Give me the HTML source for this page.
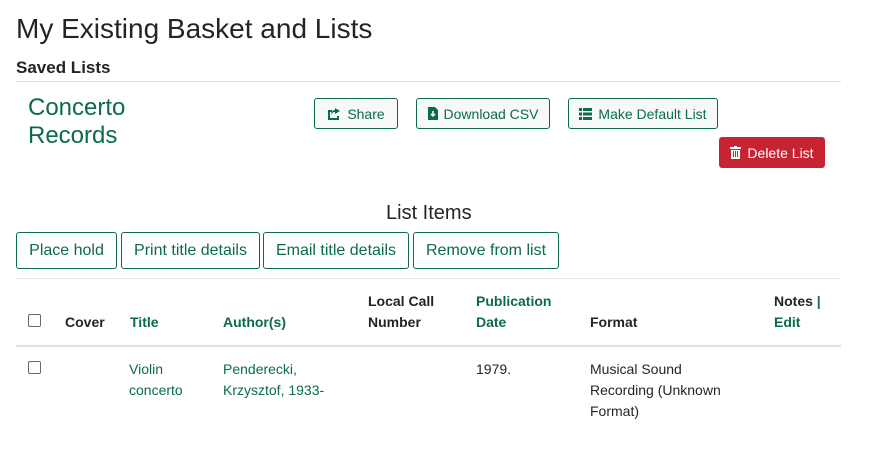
<!DOCTYPE html>
<html><head><style>
body{margin:0;width:880px;height:462px;background:#fff;font-family:"Liberation Sans",sans-serif;color:#212529;position:relative;overflow:hidden}
.a{position:absolute;white-space:nowrap}
.g{color:#0b6b4a}
.btn{position:absolute;box-sizing:border-box;border:1px solid #0b6b4a;border-radius:3px;color:#0b6b4a;background:#f8f9fa;font-size:14px;display:flex;align-items:center;justify-content:center;gap:6px}
.btn2{position:absolute;box-sizing:border-box;border:1px solid #0b6b4a;border-radius:3px;color:#0b6b4a;background:#fff;font-size:16px;display:flex;align-items:center;justify-content:center}
.th{font-size:14px;font-weight:bold;line-height:21px}
.td{font-size:14px;line-height:21px}
.cb{position:absolute;width:11px;height:11px;border:1px solid #666;border-radius:2px;background:#fff}
</style></head><body>
<div class="a" style="left:16px;top:13px;font-size:28px">My Existing Basket and Lists</div>
<div class="a" style="left:16px;top:58px;font-size:17px;font-weight:bold">Saved Lists</div>
<div class="a" style="left:16px;top:81px;width:825px;border-top:1px solid #ddd"></div>
<div class="a g" style="left:28px;top:94px;font-size:24px;line-height:28px">Concerto<br>Records</div>
<div class="btn" style="left:314px;top:98px;width:84px;height:31px"><svg width="14" height="13" viewBox="0 0 14 13"><path d="M1 3h4v2H3v6h7V9h2v4H1z" fill="#0b6b4a"/><path d="M8 1l5 3-5 3V5C6 5 5 6 4 8 4 5 6 3 8 3z" fill="#0b6b4a"/></svg>Share</div>
<div class="btn" style="left:416px;top:98px;width:134px;height:31px"><svg width="10" height="13" viewBox="0 0 10 13"><path d="M0 0h7l3 3v10H0z" fill="#0b6b4a"/><path d="M5 4v5M3 7l2 2 2-2" stroke="#fff" stroke-width="1.5" fill="none"/></svg>Download CSV</div>
<div class="btn" style="left:568px;top:98px;width:150px;height:31px"><svg width="13" height="12" viewBox="0 0 13 12"><path d="M0 0h3v3H0zM4 0h9v3H4zM0 4.5h3v3H0zM4 4.5h9v3H4zM0 9h3v3H0zM4 9h9v3H4z" fill="#0b6b4a"/></svg>Make Default List</div>
<div class="btn" style="left:719px;top:137px;width:106px;height:31px;background:#c82333;border-color:#c82333;color:#fff"><svg width="11" height="13" viewBox="0 0 11 13"><path d="M0 1h11v2H0zM4 0h3v1H4zM1 4h9v9H1z" fill="#fff"/><path d="M3.5 5v6M5.5 5v6M7.5 5v6" stroke="#c82333"/></svg>Delete List</div>
<div class="a" style="left:386px;top:202px;font-size:20px">List Items</div>
<div class="btn2" style="left:16px;top:232px;width:101px;height:37px">Place hold</div>
<div class="btn2" style="left:121px;top:232px;width:139px;height:37px">Print title details</div>
<div class="btn2" style="left:263px;top:232px;width:146px;height:37px">Email title details</div>
<div class="btn2" style="left:413px;top:232px;width:146px;height:37px">Remove from list</div>
<div class="a" style="left:16px;top:278px;width:825px;border-top:1px solid #e5e5e5"></div>
<div class="cb" style="left:28px;top:314px"></div>
<div class="a th" style="left:65px;top:312px">Cover</div>
<div class="a th g" style="left:130px;top:312px">Title</div>
<div class="a th g" style="left:223px;top:312px">Author(s)</div>
<div class="a th" style="left:368px;top:291px">Local Call<br>Number</div>
<div class="a th g" style="left:476px;top:291px">Publication<br>Date</div>
<div class="a th" style="left:590px;top:312px">Format</div>
<div class="a th" style="left:774px;top:291px">Notes <span class="g">|</span><br><span class="g">Edit</span></div>
<div class="a" style="left:16px;top:345px;width:825px;border-top:2px solid #dee2e6"></div>
<div class="cb" style="left:28px;top:361px"></div>
<div class="a td g" style="left:129px;top:359px">Violin<br>concerto</div>
<div class="a td g" style="left:223px;top:359px">Penderecki,<br>Krzysztof, 1933-</div>
<div class="a td" style="left:476px;top:359px">1979.</div>
<div class="a td" style="left:590px;top:359px">Musical Sound<br>Recording (Unknown<br>Format)</div>
</body></html>
